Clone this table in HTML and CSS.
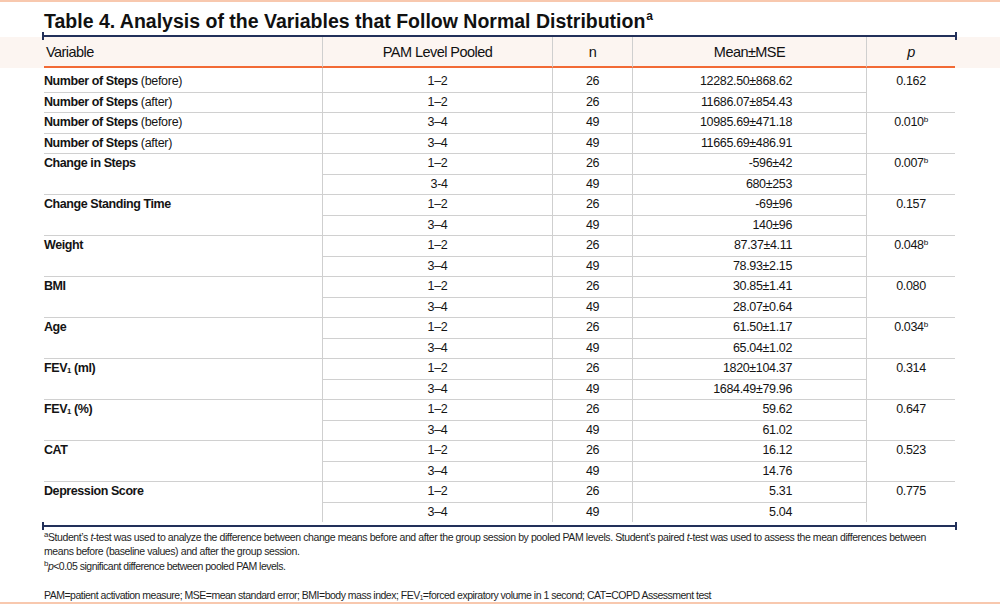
FILE: index.html
```html
<!DOCTYPE html>
<html lang="en">
<head>
<meta charset="utf-8">
<title>Table 4</title>
<link rel="stylesheet" href="styles.css">
</head>
<body>
<div class="topline"></div>
<h1 class="title">Table 4. Analysis of the Variables that Follow Normal Distribution<sup class="title-sup">a</sup></h1>
<div class="rule"></div>
<table class="data">
  <colgroup>
    <col class="c-var"><col class="c-pam"><col class="c-n"><col class="c-mean"><col class="c-p">
  </colgroup>
  <thead>
    <tr>
      <th class="h-var">Variable</th>
      <th>PAM Level Pooled</th>
      <th>n</th>
      <th>Mean±MSE</th>
      <th class="h-p"><i>p</i></th>
    </tr>
  </thead>
  <tbody>
    <tr class="first">
      <td class="var"><b>Number of Steps</b> <span class="reg">(before)</span></td>
      <td class="ctr">1–2</td><td class="ctr">26</td><td class="mean">12282.50±868.62</td>
      <td class="pv" rowspan="2">0.162</td>
    </tr>
    <tr>
      <td class="var"><b>Number of Steps</b> <span class="reg">(after)</span></td>
      <td class="ctr">1–2</td><td class="ctr">26</td><td class="mean">11686.07±854.43</td>
    </tr>
    <tr>
      <td class="var"><b>Number of Steps</b> <span class="reg">(before)</span></td>
      <td class="ctr">3–4</td><td class="ctr">49</td><td class="mean">10985.69±471.18</td>
      <td class="pv" rowspan="2">0.010<sup>b</sup></td>
    </tr>
    <tr>
      <td class="var"><b>Number of Steps</b> <span class="reg">(after)</span></td>
      <td class="ctr">3–4</td><td class="ctr">49</td><td class="mean">11665.69±486.91</td>
    </tr>
    <tr>
      <td class="var" rowspan="2"><b>Change in Steps</b></td>
      <td class="ctr">1–2</td><td class="ctr">26</td><td class="mean">-596±42</td>
      <td class="pv" rowspan="2">0.007<sup>b</sup></td>
    </tr>
    <tr>
      <td class="ctr">&nbsp;3-4</td><td class="ctr">49</td><td class="mean">680±253</td>
    </tr>
    <tr>
      <td class="var" rowspan="2"><b>Change Standing Time</b></td>
      <td class="ctr">1–2</td><td class="ctr">26</td><td class="mean">-69±96</td>
      <td class="pv" rowspan="2">0.157</td>
    </tr>
    <tr>
      <td class="ctr">3–4</td><td class="ctr">49</td><td class="mean">140±96</td>
    </tr>
    <tr>
      <td class="var" rowspan="2"><b>Weight</b></td>
      <td class="ctr">1–2</td><td class="ctr">26</td><td class="mean">87.37±4.11</td>
      <td class="pv" rowspan="2">0.048<sup>b</sup></td>
    </tr>
    <tr>
      <td class="ctr">3–4</td><td class="ctr">49</td><td class="mean">78.93±2.15</td>
    </tr>
    <tr>
      <td class="var" rowspan="2"><b>BMI</b></td>
      <td class="ctr">1–2</td><td class="ctr">26</td><td class="mean">30.85±1.41</td>
      <td class="pv" rowspan="2">0.080</td>
    </tr>
    <tr>
      <td class="ctr">3–4</td><td class="ctr">49</td><td class="mean">28.07±0.64</td>
    </tr>
    <tr>
      <td class="var" rowspan="2"><b>Age</b></td>
      <td class="ctr">1–2</td><td class="ctr">26</td><td class="mean">61.50±1.17</td>
      <td class="pv" rowspan="2">0.034<sup>b</sup></td>
    </tr>
    <tr>
      <td class="ctr">3–4</td><td class="ctr">49</td><td class="mean">65.04±1.02</td>
    </tr>
    <tr>
      <td class="var" rowspan="2"><b>FEV<sub>1</sub> (ml)</b></td>
      <td class="ctr">1–2</td><td class="ctr">26</td><td class="mean">1820±104.37</td>
      <td class="pv" rowspan="2">0.314</td>
    </tr>
    <tr>
      <td class="ctr">3–4</td><td class="ctr">49</td><td class="mean">1684.49±79.96</td>
    </tr>
    <tr>
      <td class="var" rowspan="2"><b>FEV<sub>1</sub> (%)</b></td>
      <td class="ctr">1–2</td><td class="ctr">26</td><td class="mean">59.62</td>
      <td class="pv" rowspan="2">0.647</td>
    </tr>
    <tr>
      <td class="ctr">3–4</td><td class="ctr">49</td><td class="mean">61.02</td>
    </tr>
    <tr>
      <td class="var" rowspan="2"><b>CAT</b></td>
      <td class="ctr">1–2</td><td class="ctr">26</td><td class="mean">16.12</td>
      <td class="pv" rowspan="2">0.523</td>
    </tr>
    <tr>
      <td class="ctr">3–4</td><td class="ctr">49</td><td class="mean">14.76</td>
    </tr>
    <tr>
      <td class="var" rowspan="2"><b>Depression Score</b></td>
      <td class="ctr">1–2</td><td class="ctr">26</td><td class="mean">5.31</td>
      <td class="pv" rowspan="2">0.775</td>
    </tr>
    <tr class="last">
      <td class="ctr">3–4</td><td class="ctr">49</td><td class="mean">5.04</td>
    </tr>
  </tbody>
</table>
<div class="rule"></div>
<div class="notes">
  <p class="note-a"><sup>a</sup>Student’s <i>t</i>-test was used to analyze the difference between change means before and after the group session by pooled PAM levels. Student’s paired <i>t</i>-test was used to assess the mean differences between<br>means before (baseline values) and after the group session.</p>
  <p><sup>b</sup><i>p</i>&lt;0.05 significant difference between pooled PAM levels.</p>
  <p class="abbr">PAM=patient activation measure; MSE=mean standard error; BMI=body mass index; FEV<sub>1</sub>=forced expiratory volume in 1 second; CAT=COPD Assessment test</p>
</div>
<div class="bottomline"></div>
</body>
</html>
```

FILE: styles.css
```css
html, body {
  margin: 0;
  padding: 0;
  background: #ffffff;
}
body {
  width: 1000px;
  height: 606px;
  overflow: hidden;
  font-family: "Liberation Sans", Arial, sans-serif;
  color: #141414;
}
.topline {
  height: 2px;
  background: #f8c8ae;
}
.title {
  margin: 8px 0 0 44px;
  font-size: 19.5px;
  line-height: 22px;
  font-weight: 700;
  color: #111;
  white-space: nowrap;
}
.title-sup {
  font-size: 12px;
  vertical-align: 8px;
  line-height: 0;
  margin-left: 1px;
}
.rule {
  position: relative;
  margin: 3px 0 0 42px;
  width: 915px;
  height: 2px;
  background: #22305a;
}
.rule::before,
.rule::after {
  content: "";
  position: absolute;
  top: -3px;
  width: 2px;
  height: 8px;
  background: #22305a;
}
.rule::before { left: 0; }
.rule::after { right: 0; }

.data {
  margin-left: 44px;
  width: 911px;
  table-layout: fixed;
  border-collapse: separate;
  border-spacing: 0;
}
.c-var { width: 278px; }
.c-pam { width: 230px; }
.c-n { width: 80px; }
.c-mean { width: 234px; }
.c-p { width: 89px; }

.data thead tr { height: 31px; }
.data th {
  padding: 0;
  font-weight: 400;
  font-size: 14.5px;
  letter-spacing: -0.55px;
  text-align: center;
  vertical-align: middle;
  background: #fcf5f1;
  border-bottom: 2px solid #f26a35;
  border-left: 1px solid #cfcfcf;
  color: #111;
}
.data th.h-var {
  text-align: left;
  padding-left: 2px;
  border-left: none;
  box-shadow: -44px 0 0 0 #fcf5f1;
}
.data th.h-p {
  box-shadow: 45px 0 0 0 #fcf5f1;
}

.data tbody tr { height: 20.5px; }
.data tbody tr.first { height: 24.5px; }
.data tbody tr.last { height: 17px; }
.data td {
  padding: 0;
  font-size: 12.5px;
  letter-spacing: -0.35px;
  line-height: 19px;
  vertical-align: top;
  border-bottom: 1px solid #d0d0d0;
  border-left: 1px solid #cfcfcf;
  white-space: nowrap;
}
.data tr.first td { padding-top: 4px; }
.data tr:last-child td { border-bottom: none; }
.data tbody tr:nth-last-child(2) td[rowspan] { border-bottom: none; }
.data td.var {
  border-left: none;
  font-size: 12.5px;
  letter-spacing: -0.42px;
}
.data td.var b { font-weight: 700; }
.data td.var .reg {
  letter-spacing: -0.3px;
}
.data td.var sub,
.notes sub {
  font-size: 0.62em;
  vertical-align: -1px;
  line-height: 0;
}
.data td.ctr { text-align: center; }
.data td.mean {
  text-align: right;
  padding-right: 74px;
}
.data td.pv { text-align: center; }
.data td.pv sup {
  font-size: 0.65em;
  vertical-align: 4px;
  line-height: 0;
}
.notes sup {
  font-size: 0.75em;
  vertical-align: 4px;
  line-height: 0;
}

.notes {
  margin: 3px 0 0 44px;
  font-size: 10.5px;
  line-height: 14.5px;
  letter-spacing: -0.5px;
  color: #1e1e1e;
  white-space: nowrap;
}
.notes p { margin: 0; }
.notes p.note-a { letter-spacing: -0.41px; }
.notes p.abbr { margin-top: 14.5px; }
.bottomline {
  height: 2px;
  background: #f8c8ae;
}
```
